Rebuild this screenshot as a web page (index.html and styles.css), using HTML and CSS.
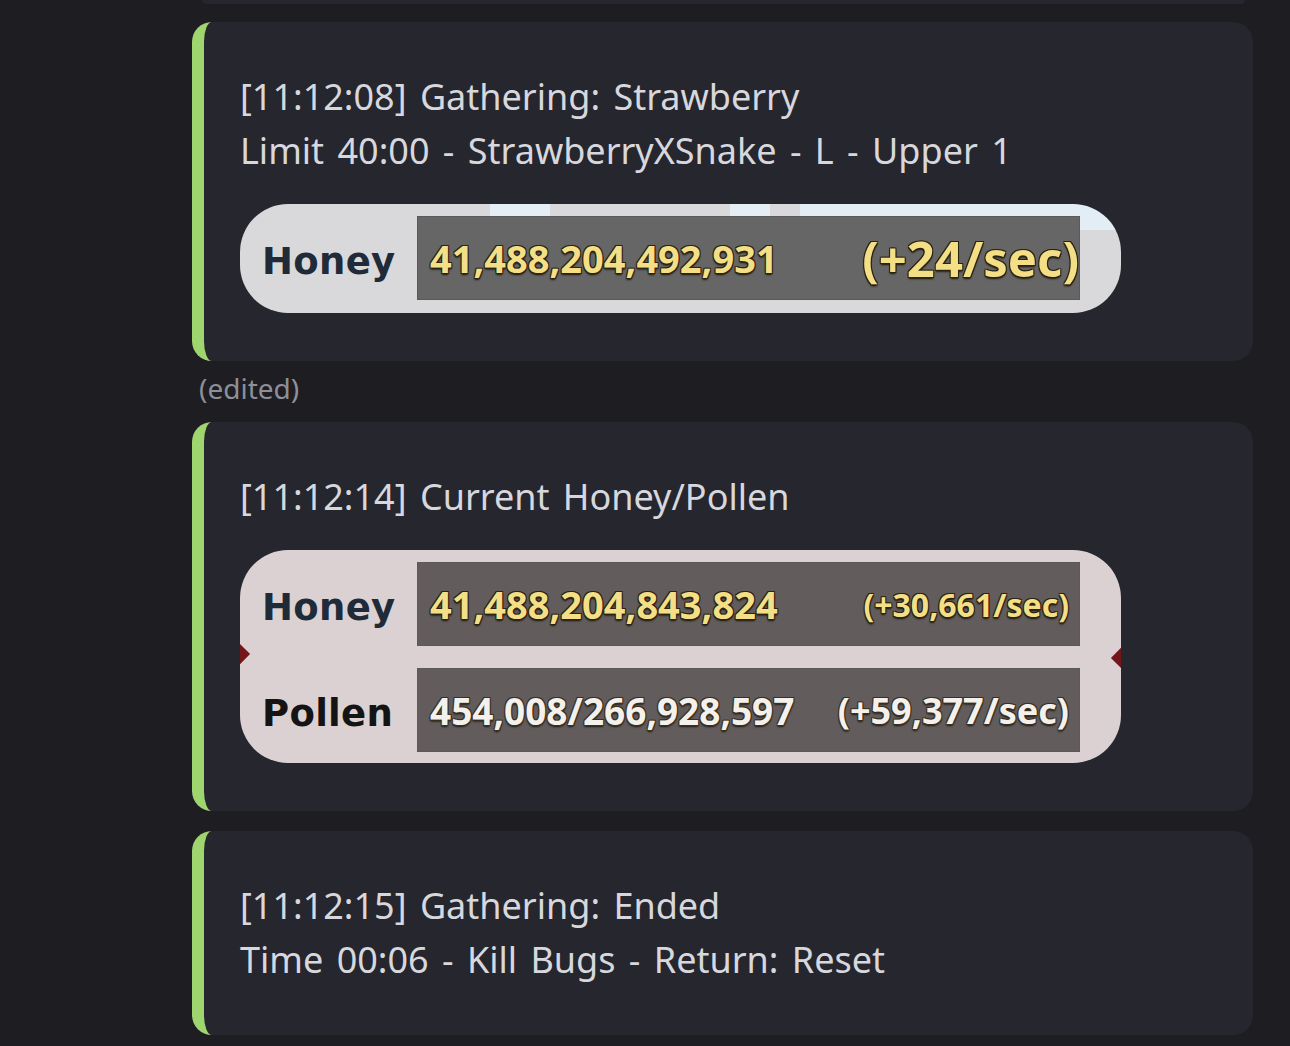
FILE: index.html
```html
<!DOCTYPE html>
<html lang="en">
<head>
    <meta charset="UTF-8">
    <meta name="viewport" content="width=device-width, initial-scale=1.0">
    <title>Gathering log</title>
    <link rel="stylesheet" href="styles.css">
</head>
<body>
    <div class="feed">
        <div class="card-tail"></div>

        <div class="embed">
            <div class="embed-text">
                [11:12:08] Gathering: Strawberry<br>
                Limit 40:00 - StrawberryXSnake - L - Upper 1
            </div>
            <div class="shot shot-sky">
                <div class="stat-row">
                    <span class="stat-label honey-label">Honey</span>
                    <div class="stat-box">
                        <span class="stat-value honey">41,488,204,492,931</span>
                        <span class="stat-rate honey big-rate">(+24/sec)</span>
                    </div>
                </div>
            </div>
        </div>

        <div class="edited">(edited)</div>

        <div class="embed">
            <div class="embed-text">
                [11:12:14] Current Honey/Pollen
            </div>
            <div class="shot shot-pink">
                <div class="stat-row">
                    <span class="stat-label honey-label">Honey</span>
                    <div class="stat-box">
                        <span class="stat-value honey">41,488,204,843,824</span>
                        <span class="stat-rate honey small-rate">(+30,661/sec)</span>
                    </div>
                </div>
                <div class="stat-row">
                    <span class="stat-label pollen-label">Pollen</span>
                    <div class="stat-box">
                        <span class="stat-value pollen">454,008/266,928,597</span>
                        <span class="stat-rate pollen">(+59,377/sec)</span>
                    </div>
                </div>
            </div>
        </div>

        <div class="embed">
            <div class="embed-text">
                [11:12:15] Gathering: Ended<br>
                Time 00:06 - Kill Bugs - Return: Reset
            </div>
        </div>
    </div>
</body>
</html>
```

FILE: styles.css
```css
body {
    margin: 0;
    padding: 0;
    background-color: #1d1d22;
    font-family: 'Noto Sans', sans-serif;
    overflow: hidden;
}

.feed {
    width: 1061px;
    margin-left: 192px;
    display: flex;
    flex-direction: column;
}

.card-tail {
    height: 4px;
    background-color: #26262e;
    border-radius: 0 0 6px 6px;
    margin-left: 10px;
    margin-right: 8px;
    margin-bottom: 18px;
}

.embed {
    background-color: #26262e;
    border-left: 12px solid #9fd56f;
    border-radius: 20px;
    padding: 48px 36px 48px 36px;
    margin-bottom: 20px;
}

.embed-text {
    color: #d7d8dd;
    font-size: 36px;
    line-height: 54px;
    word-spacing: 4px;
}

.edited {
    color: #8e8f98;
    font-size: 28px;
    line-height: 38px;
    margin: -12px 0 15px 7px;
}

/* screenshot of the in-game counter */
.shot {
    position: relative;
    width: 881px;
    margin-top: 26px;
    box-sizing: border-box;
    padding: 12px 41px 13px 22px;
    border-radius: 48px;
    display: flex;
    flex-direction: column;
    gap: 22px;
    overflow: hidden;
}

.shot-sky {
    background:
        linear-gradient(#e3eef6, #e3eef6) 250px 0 / 60px 14px no-repeat,
        linear-gradient(#e4eef5, #e4eef5) 490px 0 / 40px 12px no-repeat,
        linear-gradient(#e2edf6, #e2edf6) 560px 0 / 320px 26px no-repeat,
        #d9d9db;
}

.shot-pink {
    background-color: #dcd1d2;
    padding-bottom: 11px;
}

.shot-pink::before,
.shot-pink::after {
    content: '';
    position: absolute;
    top: 97px;
    width: 18px;
    height: 18px;
    background-color: #72161a;
    transform: rotate(45deg) scale(0.8, 1.1);
}

.shot-pink::before {
    left: -11px;
}

.shot-pink::after {
    right: -11px;
}

.stat-row {
    display: flex;
    align-items: center;
}

.stat-label {
    width: 155px;
    padding-top: 6px;
    font-family: 'DejaVu Sans', sans-serif;
    font-weight: bold;
    font-size: 37px;
    letter-spacing: 0.3px;
}

.honey-label {
    color: #1f2b38;
}

.pollen-label {
    color: #141414;
}

.stat-box {
    flex: 1;
    height: 84px;
    box-sizing: border-box;
    background-color: #676666;
    border: 1px solid #5b5a5a;
    display: flex;
    align-items: center;
    justify-content: space-between;
    padding: 0 10px 0 12px;
    font-family: 'Noto Sans', sans-serif;
    font-weight: bold;
}

.shot-pink .stat-box {
    background-color: #625c5d;
}

.stat-value {
    font-size: 38px;
}

.pollen.stat-value {
    font-size: 37px;
}

.stat-rate {
    font-size: 36px;
}

.big-rate {
    font-size: 49px;
    margin-right: -10px;
}

.small-rate {
    font-size: 32px;
}

.honey {
    color: #f4df86;
    text-shadow: -1px -1px 0 #2a2412, 1px -1px 0 #2a2412, -1px 1px 0 #2a2412, 1px 1px 0 #2a2412, 0 2px 2px #1a1508;
}

.pollen {
    color: #f4f1ec;
    text-shadow: -1px -1px 0 #3a3022, 1px -1px 0 #3a3022, -1px 1px 0 #3a3022, 1px 1px 0 #3a3022, 0 2px 2px #1e1910;
}
```
